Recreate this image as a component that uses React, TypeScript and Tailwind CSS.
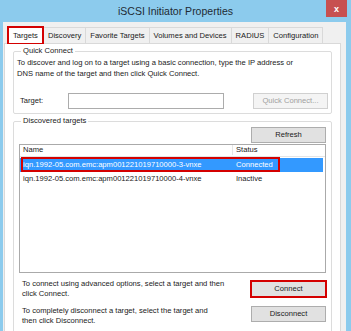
import React from 'react';

const tabs = ['Targets', 'Discovery', 'Favorite Targets', 'Volumes and Devices', 'RADIUS', 'Configuration'];

const targets = [
  { name: 'iqn.1992-05.com.emc:apm001221019710000-3-vnxe', status: 'Connected', selected: true },
  { name: 'iqn.1992-05.com.emc:apm001221019710000-4-vnxe', status: 'Inactive', selected: false },
];

const Button: React.FC<{ label: string; disabled?: boolean; highlight?: boolean }> = ({ label, disabled, highlight }) => (
  <div
    className={
      'w-[75px] h-[16px] shrink-0 flex items-center justify-center border bg-[#e1e1e1] ' +
      (highlight ? 'border-[#d40000] outline outline-1 outline-[#d40000]' : 'border-[#adadad]') +
      (disabled ? ' bg-[#f4f4f4] border-[#d0d0d0] text-[#a0a0a0]' : ' text-[#1a1a1a]')
    }
  >
    {label}
  </div>
);

const App: React.FC = () => {
  return (
    <div
      className="w-[351px] h-[331px] bg-[#8ccbed] flex flex-col overflow-hidden text-[7.6px] leading-[10px] text-[#1a1a1a]"
      style={{ fontFamily: '"Liberation Sans", Arial, sans-serif' }}
    >
      {/* Title bar */}
      <div className="h-[22px] grid grid-cols-[1fr_auto_1fr] shrink-0">
        <div />
        <div className="pt-[4px] text-[10.5px] leading-[14px] text-[#1e2a33]">iSCSI Initiator Properties</div>
        <div className="flex justify-end pr-[4px]">
          <div className="w-[21px] h-[17px] bg-[#c75050] flex items-center justify-center text-white text-[9px] font-bold">
            x
          </div>
        </div>
      </div>

      {/* Dialog body */}
      <div className="flex-1 ml-[3px] mr-[5px] bg-[#f0f0f0] pl-[1px] pr-[5px] pt-[5px] flex flex-col">
        {/* Tabs */}
        <div className="flex h-[16px] pl-[4px] items-end">
          {tabs.map((t, i) => (
            <div
              key={t}
              className={
                'h-[16px] px-[4px] flex items-center border border-b-0 ' +
                (i === 0
                  ? 'bg-white border-[#d40000] outline outline-1 outline-[#d40000] z-10 mr-[1px]'
                  : 'bg-[#f0f0f0] border-[#d9d9d9] -ml-px')
              }
            >
              {t}
            </div>
          ))}
        </div>

        {/* Panel */}
        <div className="flex-1 bg-white border border-[#d9d9d9] px-[8px] pt-[2px] flex flex-col gap-[2px]">
          {/* Quick Connect */}
          <fieldset className="border border-[#dcdcdc] rounded-[2px] px-[3px] pb-[4px]">
            <legend className="ml-[4px] px-[2px] text-[#1a1a1a]">Quick Connect</legend>
            <div className="pt-[1px] leading-[11px]">
              To discover and log on to a target using a basic connection, type the IP address or
              <br />
              DNS name of the target and then click Quick Connect.
            </div>
            <div className="flex items-center mt-[14px] h-[16px]">
              <div className="w-[51px] pl-[3px]">Target:</div>
              <div className="w-[156px] h-[16px] border border-[#acacac] bg-white" />
              <div className="flex-1" />
              <Button label="Quick Connect..." disabled />
            </div>
          </fieldset>

          {/* Discovered targets */}
          <fieldset className="flex-1 border border-[#dcdcdc] rounded-[2px] px-[5px] pb-[6px] flex flex-col">
            <legend className="ml-[2px] px-[2px] text-[#1a1a1a]">Discovered targets</legend>
            <div className="flex justify-end pt-[1px]">
              <Button label="Refresh" />
            </div>
            <div className="mt-[1px] h-[129px] shrink-0 border border-[#aaaaaa] bg-white flex flex-col">
              <div className="h-[12px] flex items-end pb-[1px] border-b border-[#e5e5e5]">
                <div className="w-[213px] pl-[3px] border-r border-[#e5e5e5]">Name</div>
                <div className="pl-[3px]">Status</div>
              </div>
              {targets.map((r) => (
                <div
                  key={r.name}
                  className={
                    'relative h-[14px] flex items-center mr-[2px] ' +
                    (r.selected ? 'bg-[#3399ff] text-white mt-[1px]' : '')
                  }
                >
                  {r.selected && (
                    <div className="absolute left-[1px] top-[-1px] w-[259px] h-[15px] border-2 border-[#d40000]" />
                  )}
                  <div className="w-[213px] pl-[3px]">{r.name}</div>
                  <div className="pl-[3px]">{r.status}</div>
                </div>
              ))}
            </div>
            <div className="flex items-start justify-between mt-[6px]">
              <div className="pl-[3px] leading-[10px]">
                To connect using advanced options, select a target and then
                <br />
                click Connect.
              </div>
              <div className="mt-[2px]">
                <Button label="Connect" highlight />
              </div>
            </div>
            <div className="flex items-start justify-between mt-[7px]">
              <div className="pl-[3px] leading-[10px]">
                To completely disconnect a target, select the target and
                <br />
                then click Disconnect.
              </div>
              <Button label="Disconnect" />
            </div>
          </fieldset>
        </div>
      </div>
    </div>
  );
};

export default App;
